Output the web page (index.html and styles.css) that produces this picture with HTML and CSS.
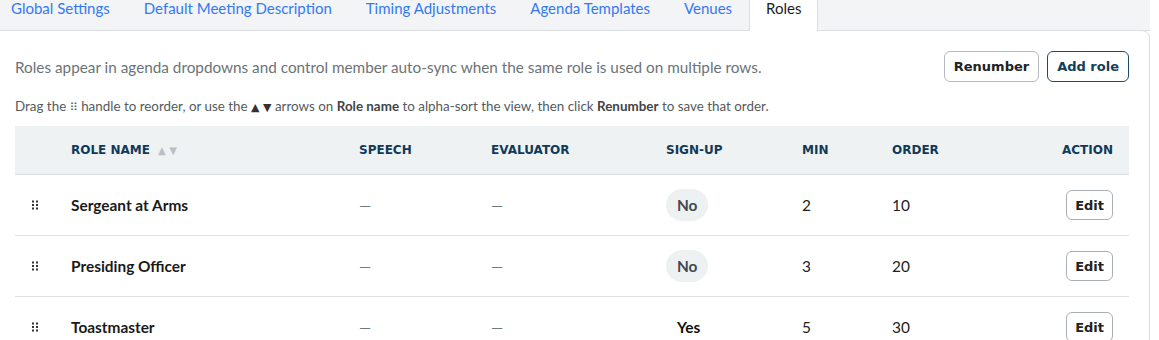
FILE: index.html
```html
<!DOCTYPE html>
<html lang="en">
<head>
    <meta charset="UTF-8">
    <meta name="viewport" content="width=device-width, initial-scale=1.0">
    <title>Settings - Roles</title>
    <link rel="stylesheet" href="styles.css">
</head>
<body>
    <div class="page">
        <nav class="tabs">
            <a class="tab" href="#">Global Settings</a>
            <a class="tab" href="#">Default Meeting Description</a>
            <a class="tab" href="#">Timing Adjustments</a>
            <a class="tab" href="#">Agenda Templates</a>
            <a class="tab" href="#">Venues</a>
            <a class="tab active" href="#">Roles</a>
        </nav>
        <section class="card">
            <div class="card-head">
                <p class="intro">Roles appear in agenda dropdowns and control member auto-sync when the same role is used on multiple rows.</p>
                <div class="actions">
                    <button class="btn">Renumber</button>
                    <button class="btn btn-primary">Add role</button>
                </div>
            </div>
            <p class="hint">Drag the <span class="grip">⠿</span> handle to reorder, or use the <span class="arrows">▲ ▼</span> arrows on <b>Role name</b> to alpha-sort the view, then click <b>Renumber</b> to save that order.</p>
            <table class="roles">
                <colgroup>
                    <col class="c-handle">
                    <col class="c-name">
                    <col class="c-speech">
                    <col class="c-eval">
                    <col class="c-signup">
                    <col class="c-min">
                    <col class="c-order">
                    <col>
                </colgroup>
                <thead>
                    <tr>
                        <th></th>
                        <th>Role name <span class="sort">▲ ▼</span></th>
                        <th>Speech</th>
                        <th>Evaluator</th>
                        <th>Sign-up</th>
                        <th>Min</th>
                        <th>Order</th>
                        <th class="right">Action</th>
                    </tr>
                </thead>
                <tbody id="role-rows"></tbody>
            </table>
        </section>
    </div>
    <script>
        const roles = [
            { name: "Sergeant at Arms", signup: false, min: 2, order: 10 },
            { name: "Presiding Officer", signup: false, min: 3, order: 20 },
            { name: "Toastmaster", signup: true, min: 5, order: 30 }
        ];
        const grip = `<svg class="handle" width="8" height="10" viewBox="0 0 8 10">
            <rect x="1" y="0.5" width="2" height="2"/><rect x="5" y="0.5" width="2" height="2"/>
            <rect x="1" y="4" width="2" height="2"/><rect x="5" y="4" width="2" height="2"/>
            <rect x="1" y="7.5" width="2" height="2"/><rect x="5" y="7.5" width="2" height="2"/>
        </svg>`;
        let rows = document.getElementById("role-rows");
        roles.forEach(role => {
            rows.innerHTML += `
                <tr>
                    <td>${grip}</td>
                    <td class="name">${role.name}</td>
                    <td class="dash">—</td>
                    <td class="dash">—</td>
                    <td><span class="pill ${role.signup ? "yes" : "no"}">${role.signup ? "Yes" : "No"}</span></td>
                    <td>${role.min}</td>
                    <td>${role.order}</td>
                    <td class="right"><button class="btn btn-sm">Edit</button></td>
                </tr>
            `;
        });
    </script>
</body>
</html>
```

FILE: styles.css
```css
body {
    margin: 0;
    font-family: Lato, "Liberation Sans", sans-serif;
    color: #222;
    background: #fff;
    overflow: hidden;
}
.page {
    width: 1151px;
    margin: -10px 0 0 -1px;
}
.tabs {
    display: flex;
    margin-left: -5px;
    background: #f3f4f5;
    border-bottom: 1px solid #dcdfe2;
}
.tab {
    padding: 7px 16px 12px;
    font-size: 15px;
    line-height: 20px;
    color: #3479f4;
    text-decoration: none;
    border: 1px solid transparent;
    border-bottom: none;
    margin-bottom: -1px;
}
.tab.active {
    position: relative;
    z-index: 1;
    background: #fff;
    color: #1c1c1c;
    border-color: #dcdfe2;
    padding-bottom: 13px;
}
.card {
    position: relative;
    margin-top: -1px;
    padding: 20px 20px 40px 15px;
    border: 1px solid #dcdfe2;
    border-radius: 0 8px 0 0;
    background: #fff;
}
.card-head {
    display: flex;
    align-items: center;
    justify-content: space-between;
}
.intro {
    margin: 0;
    font-size: 15.3px;
    color: #6b7378;
}
.actions {
    display: flex;
    gap: 8px;
}
.btn {
    height: 31px;
    padding: 0 9px;
    font-family: "DejaVu Sans", sans-serif;
    font-weight: bold;
    font-size: 13px;
    color: #222;
    background: #fff;
    border: 1px solid #b4babe;
    border-radius: 6px;
    cursor: pointer;
}
.btn-primary {
    color: #123e5e;
    border-color: #1d4a6b;
}
.btn-sm {
    height: 30px;
    padding: 0 8px;
    border-color: #a9afb3;
}
.hint {
    margin: 15px 0 9px;
    font-size: 13.4px;
    line-height: 18px;
    color: #555b60;
}
.hint b {
    color: #444;
}
.grip {
    font-family: "DejaVu Sans", sans-serif;
    font-size: 11px;
}
.arrows {
    font-family: "DejaVu Sans", sans-serif;
    font-size: 11px;
    color: #333;
}
.roles {
    width: 100%;
    border-collapse: collapse;
    table-layout: fixed;
}
.c-handle { width: 40px; }
.c-name { width: 288px; }
.c-speech { width: 132px; }
.c-eval { width: 175px; }
.c-signup { width: 136px; }
.c-min { width: 90px; }
.c-order { width: 130px; }
.roles th {
    height: 48px;
    padding: 0 16px;
    text-align: left;
    background: #eff2f3;
    border-bottom: 1px solid #d6dbde;
    font-family: "DejaVu Sans", sans-serif;
    font-size: 12px;
    font-weight: bold;
    text-transform: uppercase;
    color: #103a5a;
}
.sort {
    margin-left: 4px;
    font-size: 10px;
    color: #b9c0c5;
}
.roles td {
    height: 60px;
    padding: 0 16px;
    font-size: 15.4px;
    color: #222;
    border-bottom: 1px solid #dfe2e4;
}
.roles .right {
    text-align: right;
}
.handle {
    display: block;
    fill: #333;
}
.roles td.name {
    font-weight: bold;
    color: #1a1a1a;
}
.roles td.dash {
    color: #777;
}
.pill {
    display: inline-block;
    padding: 0 11px;
    line-height: 32px;
    border-radius: 16px;
    font-weight: bold;
}
.pill.no {
    background: #eef1f2;
    color: #3e4952;
}
.pill.yes {
    color: #111;
}
```
